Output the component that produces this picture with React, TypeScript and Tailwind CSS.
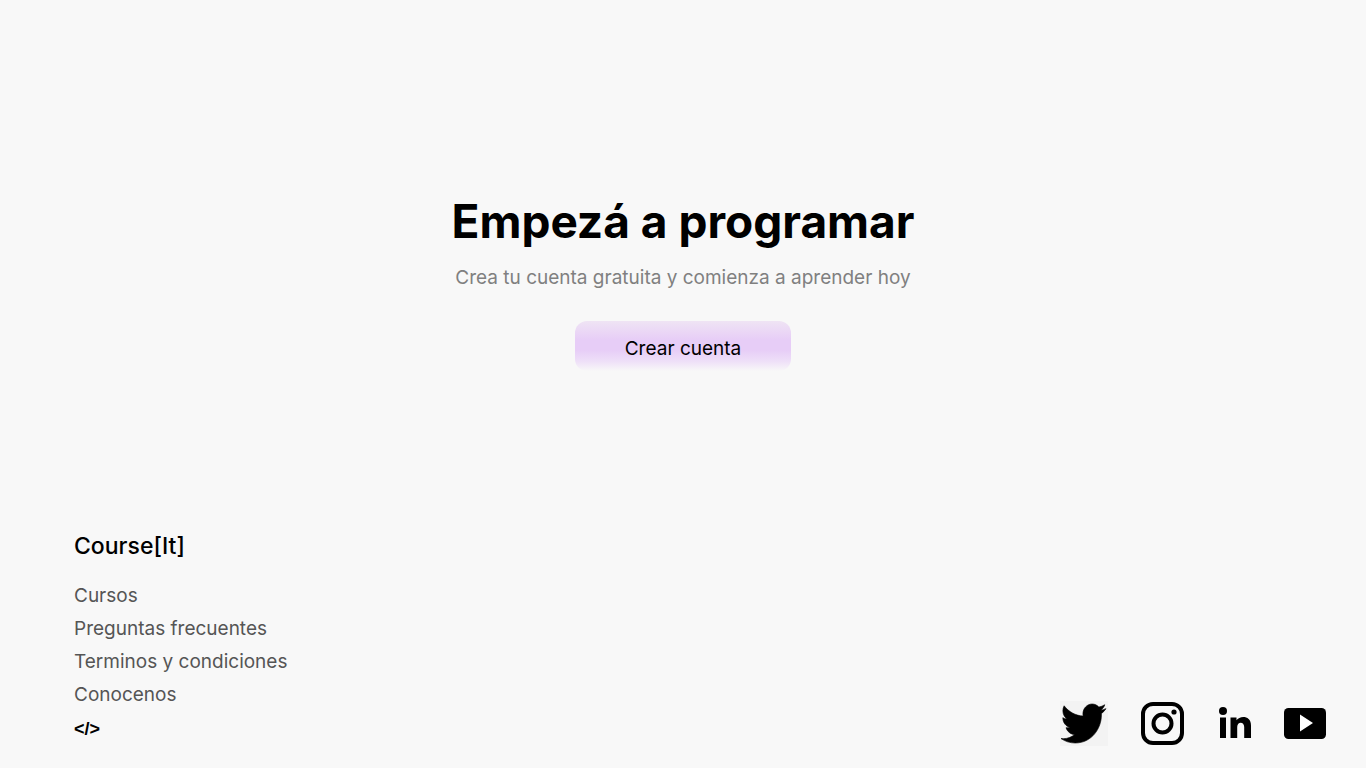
const links = ['Cursos', 'Preguntas frecuentes', 'Terminos y condiciones', 'Conocenos'];

function TwitterIcon() {
  return (
    <svg className="h-[45px] w-12" viewBox="0 0 48 45" aria-hidden="true">
      <rect width="48" height="45" fill="#f3f3f3" />
      <svg x="1" y="3" width="45" height="39" viewBox="0 48 512 416" preserveAspectRatio="none" overflow="visible">
        <path stroke="#000" strokeWidth="7" strokeLinejoin="round" d="M459.37 151.716c.325 4.548.325 9.097.325 13.645 0 138.72-105.583 298.558-298.558 298.558-59.452 0-114.68-17.219-161.137-47.106 8.447.974 16.568 1.299 25.34 1.299 49.055 0 94.213-16.568 130.274-44.832-46.132-.975-84.792-31.188-98.112-72.772 6.498.974 12.995 1.624 19.818 1.624 9.421 0 18.843-1.3 27.614-3.573-48.081-9.747-84.143-51.98-84.143-102.985v-1.299c13.969 7.797 30.214 12.67 47.431 13.319-28.264-18.843-46.781-51.005-46.781-87.391 0-19.492 5.197-37.36 14.294-52.954 51.655 63.675 129.3 105.258 216.365 109.807-1.624-7.797-2.599-15.918-2.599-24.04 0-57.828 46.782-104.934 104.934-104.934 30.213 0 57.502 12.67 76.67 33.137 23.715-4.548 46.456-13.32 66.599-25.34-7.798 24.366-24.366 44.833-46.132 57.827 21.117-2.273 41.584-8.122 60.426-16.243-14.292 20.791-32.161 39.308-52.628 54.253z" />
      </svg>
    </svg>
  );
}

function InstagramIcon() {
  return (
    <svg className="size-[43px]" viewBox="0 0 43 43" fill="none" stroke="#000" strokeWidth="4" aria-hidden="true">
      <rect x="2" y="2" width="39" height="39" rx="10" />
      <circle cx="21.5" cy="21.5" r="9" />
      <circle cx="33" cy="10" r="2.6" fill="#000" stroke="none" />
    </svg>
  );
}

function LinkedinIcon() {
  return (
    <svg className="h-8 w-[34px]" viewBox="-2 0 34 32" aria-hidden="true">
      <circle cx="4" cy="4" r="4" />
      <path d="M1 10.500H7V31H1ZM11.500 10.500H17.500V13.300C20.500 8.500 32 8 32 18.500V31H25.200V20C25.200 14.300 18.200 14.300 18.200 20V31H11.500Z" />
    </svg>
  );
}

function YoutubeIcon() {
  return (
    <svg className="h-[31px] w-[42px]" viewBox="0 0 42 31" aria-hidden="true">
      <rect width="42" height="31" rx="4.5" />
      <path d="M16 6.500V23.500L29 15Z" fill="#fff" />
    </svg>
  );
}

export default function App() {
  return (
    <div className="flex min-h-screen flex-col justify-between bg-[#f8f8f8] font-['Inter','Liberation_Sans',sans-serif] text-black">
      <main className="flex flex-col items-center px-6 pt-[191px]">
        <h1 className="text-center text-[46px] leading-[60px] font-bold">Empezá a programar</h1>
        <p className="mt-[13px] text-center text-[19px] leading-7 text-[#808080]">Crea tu cuenta gratuita y comienza a aprender hoy</p>
        <button type="button" className="mt-[29px] h-[50px] w-[216px] rounded-xl bg-[linear-gradient(to_bottom,#efe4f4_0%,#e7cdf7_38%,#e7cdf7_58%,#eedff8_80%,#f8f8f8_100%)] pt-1.5 text-[19px]">
          Crear cuenta
        </button>
      </main>
      <footer className="flex items-end justify-between pr-10 pb-5 pl-[74px]">
        <nav aria-label="Pie de página">
          <h2 className="mb-[19px] text-[23px] leading-7 font-medium">Course[It]</h2>
          <ul className="text-[19px] leading-[33px] text-[#555]">
            {links.map((label) => (
              <li key={label}>
                <a href="#">{label}</a>
              </li>
            ))}
          </ul>
          <p className="font-['Liberation_Sans',sans-serif] text-lg leading-[37px] font-bold">&lt;/&gt;</p>
        </nav>
        <div className="flex h-[50px] items-center gap-[33px]">
          <a href="#" aria-label="Twitter"><TwitterIcon /></a>
          <a href="#" aria-label="Instagram"><InstagramIcon /></a>
          <a href="#" aria-label="LinkedIn"><LinkedinIcon /></a>
          <a href="#" aria-label="YouTube"><YoutubeIcon /></a>
        </div>
      </footer>
    </div>
  );
}
